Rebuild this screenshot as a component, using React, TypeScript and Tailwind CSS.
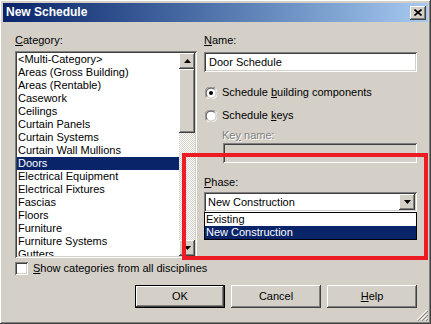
import React from "react";

const categories = [
  "<Multi-Category>",
  "Areas (Gross Building)",
  "Areas (Rentable)",
  "Casework",
  "Ceilings",
  "Curtain Panels",
  "Curtain Systems",
  "Curtain Wall Mullions",
  "Doors",
  "Electrical Equipment",
  "Electrical Fixtures",
  "Fascias",
  "Floors",
  "Furniture",
  "Furniture Systems",
  "Gutters",
];

const raised =
  "shadow-[inset_-1px_-1px_#404040,inset_1px_1px_#ffffff,inset_-2px_-2px_#808080,inset_2px_2px_#d4d0c8]";
const sunken =
  "shadow-[inset_1px_1px_#808080,inset_-1px_-1px_#ffffff,inset_2px_2px_#404040,inset_-2px_-2px_#d4d0c8]";

const Arrow = ({ down }: { down?: boolean }) => (
  <svg width="7" height="4" viewBox="0 0 7 4">
    {down ? <path d="M0 0h7L3.5 4z" fill="#000" /> : <path d="M0 4h7L3.5 0z" fill="#000" />}
  </svg>
);

const Radio = ({ checked }: { checked?: boolean }) => (
  <svg width="12" height="12" viewBox="0 0 12 12">
    <path d="M10.5 1.5A6 6 0 0 0 1.5 10.5" stroke="#808080" strokeWidth="1" fill="none" />
    <circle cx="6" cy="6" r="5" fill="#ffffff" />
    <path d="M9.5 2.5A4.6 4.6 0 0 0 2.5 9.5" stroke="#404040" strokeWidth="1" fill="none" />
    <path d="M1.5 10.5A6 6 0 0 0 10.5 1.5" stroke="#ffffff" strokeWidth="1" fill="none" />
    <path d="M2.5 9.5A4.6 4.6 0 0 0 9.5 2.5" stroke="#d4d0c8" strokeWidth="1" fill="none" />
    {checked && <circle cx="6" cy="6" r="2" fill="#000" />}
  </svg>
);

const U = ({ children }: { children: React.ReactNode }) => <span className="underline underline-offset-[1px]">{children}</span>;

export default function App() {
  return (
    <div
      className={`relative w-[431px] h-[324px] bg-[#d4d0c8] flex flex-col text-[11px] leading-[13px] text-black ${raised}`}
      style={{ fontFamily: '"Liberation Sans", Arial, sans-serif' }}
    >
      {/* title bar */}
      <div className="mx-[3px] mt-[3px] h-[19px] flex items-center justify-between bg-gradient-to-r from-[#0a246a] to-[#a6caf0] pl-[3px] pr-[2px]">
        <span className="text-white font-bold text-[12px]">New Schedule</span>
        <div className={`w-[16px] h-[14px] bg-[#d4d0c8] flex items-center justify-center ${raised}`}>
          <svg width="8" height="7" viewBox="0 0 8 7">
            <path d="M0.5 0.5L7.5 6.5M7.5 0.5L0.5 6.5" stroke="#000" strokeWidth="1.6" />
          </svg>
        </div>
      </div>

      <div className="flex flex-col pl-[15px] pr-[14px]">
        <div className="flex gap-[7px] h-[236px]">
          {/* left column */}
          <div className="w-[182px] flex flex-col">
            <div className="mt-[12px] h-[13px]">
              <U>C</U>ategory:
            </div>
            <div className={`mt-[4px] h-[207px] bg-white p-[2px] flex ${sunken}`}>
              <div className="flex-1 overflow-hidden">
                {categories.map((c) => (
                  <div
                    key={c}
                    className={`h-[13px] pl-[1px] whitespace-nowrap ${c === "Doors" ? "bg-[#0a246a] text-white" : ""}`}
                  >
                    {c}
                  </div>
                ))}
              </div>
              <div className="w-[16px] flex flex-col">
                <div className={`h-[16px] bg-[#d4d0c8] flex items-center justify-center ${raised}`}>
                  <Arrow />
                </div>
                <div className={`h-[64px] bg-[#d4d0c8] ${raised}`} />
                <div className="flex-1 bg-[repeating-conic-gradient(#ffffff_0_25%,#d4d0c8_0_50%)] bg-[length:2px_2px]" />
                <div className={`h-[16px] bg-[#d4d0c8] flex items-center justify-center ${raised}`}>
                  <Arrow down />
                </div>
              </div>
            </div>
          </div>

          {/* right column */}
          <div className="w-[213px] flex flex-col">
            <div className="mt-[12px] h-[13px]">
              <U>N</U>ame:
            </div>
            <div className={`mt-[5px] h-[20px] bg-white flex items-center pl-[5px] ${sunken}`}>Door Schedule</div>
            <div className="mt-[14px] h-[13px] flex items-center gap-[5px] pl-[1px]">
              <Radio checked />
              <span>
                Schedule <U>b</U>uilding components
              </span>
            </div>
            <div className="mt-[10px] h-[13px] flex items-center gap-[5px] pl-[1px]">
              <Radio />
              <span>
                Schedule <U>k</U>eys
              </span>
            </div>
            <div className="mt-[7px] h-[13px] ml-[18px] text-[#808080] [text-shadow:1px_1px_#ffffff]">
              Ke<U>y</U> name:
            </div>
            <div className={`mt-[1px] ml-[19px] h-[20px] bg-[#d4d0c8] ${sunken}`} />
            <div className="mt-[13px] h-[13px]">
              <U>P</U>hase:
            </div>
            <div className={`mt-[3px] h-[20px] bg-white flex items-center p-[2px] ${sunken}`}>
              <span className="flex-1 pl-[2px]">New Construction</span>
              <div className={`w-[16px] h-[16px] bg-[#d4d0c8] flex items-center justify-center ${raised}`}>
                <Arrow down />
              </div>
            </div>
            <div className="border border-black bg-white">
              <div className="h-[13px] pl-[1px]">Existing</div>
              <div className="h-[13px] pl-[1px] bg-[#0a246a] text-white">New Construction</div>
            </div>
          </div>
        </div>

        <div className="mt-[4px] h-[13px] flex items-center gap-[5px]">
          <div className={`w-[13px] h-[13px] bg-white ${sunken}`} />
          <span>
            <U>S</U>how categories from all disciplines
          </span>
        </div>

        <div className="mt-[10px] flex justify-end gap-[6px]">
          <div className="w-[90px] h-[23px] border border-black">
            <div className={`w-full h-full bg-[#d4d0c8] flex items-center justify-center ${raised}`}>OK</div>
          </div>
          <div className={`w-[90px] h-[23px] bg-[#d4d0c8] flex items-center justify-center ${raised}`}>Cancel</div>
          <div className={`w-[90px] h-[23px] bg-[#d4d0c8] flex items-center justify-center ${raised}`}>
            <span>
              <U>H</U>elp
            </span>
          </div>
        </div>
      </div>

      {/* resize grip */}
      <svg className="absolute right-[3px] bottom-[3px]" width="12" height="12" viewBox="0 0 12 12">
        <path d="M11 1L1 11M11 5L5 11M11 9L9 11" stroke="#ffffff" strokeWidth="1" />
        <path d="M12 1L1 12M12 5L5 12M12 9L9 12" stroke="#808080" strokeWidth="1" transform="translate(0.5 0.5)" />
      </svg>

      {/* red annotation */}
      <div className="absolute left-[182px] top-[153px] w-[246px] h-[107px] border-[4px] border-[#ed1c24]" />
    </div>
  );
}
